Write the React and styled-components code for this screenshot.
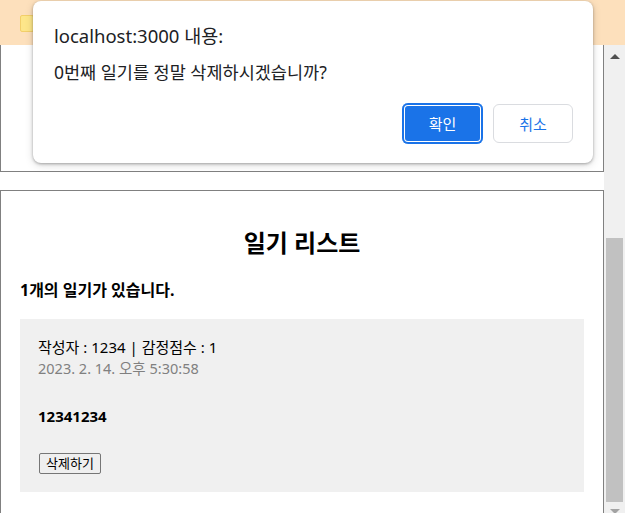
import React from "react";
import styled, { createGlobalStyle } from "styled-components";

const GlobalStyle = createGlobalStyle`
  html, body {
    margin: 0;
    padding: 0;
    background: #fff;
  }
  body {
    font-family: "Noto Sans", "Noto Sans CJK KR", sans-serif;
    color: #000;
  }
`;

const App = () => {
  const diary = {
    id: 0,
    author: "1234",
    emotion: 1,
    content: "12341234",
    created: "2023. 2. 14. 오후 5:30:58",
  };

  return (
    <Screen>
      <GlobalStyle />
      <BookmarkBar>
        <FolderIcon width="14" height="17" viewBox="0 0 14 17">
          <rect x="0.5" y="0.5" width="13" height="16" rx="1.5" fill="#fde68a" stroke="#f2cf6a" />
        </FolderIcon>
      </BookmarkBar>
      <Viewport>
        <Content>
          <EditorBox />
          <ListBox>
            <ListTitle>일기 리스트</ListTitle>
            <ListCount>1개의 일기가 있습니다.</ListCount>
            <DiaryItem>
              <Info>
                <Author>
                  작성자 : {diary.author} | 감정점수 : {diary.emotion}
                </Author>
                <DateText>{diary.created}</DateText>
              </Info>
              <DiaryContent>{diary.content}</DiaryContent>
              <DeleteButton>삭제하기</DeleteButton>
            </DiaryItem>
          </ListBox>
        </Content>
        <Scrollbar>
          <ArrowCell>
            <ArrowUp />
          </ArrowCell>
          <Thumb />
          <ArrowCell>
            <ArrowDown />
          </ArrowCell>
        </Scrollbar>
      </Viewport>

      <Dialog>
        <DialogTitle>localhost:3000 내용:</DialogTitle>
        <DialogMessage>{diary.id}번째 일기를 정말 삭제하시겠습니까?</DialogMessage>
        <DialogActions>
          <ConfirmButton>확인</ConfirmButton>
          <CancelButton>취소</CancelButton>
        </DialogActions>
      </Dialog>
    </Screen>
  );
};

export default App;

const Screen = styled.div`
  position: relative;
  width: 625px;
  height: 513px;
  overflow: hidden;
  display: flex;
  flex-direction: column;
`;

const BookmarkBar = styled.div`
  height: 45px;
  flex: none;
  background: #fde0bc;
  display: flex;
  align-items: center;
  padding-left: 20px;
  box-sizing: border-box;
`;

const FolderIcon = styled.svg`
  display: block;
  margin-top: 1px;
`;

const Viewport = styled.div`
  flex: 1;
  display: flex;
  overflow: hidden;
`;

const Content = styled.div`
  width: 604px;
  flex: none;
`;

const EditorBox = styled.div`
  height: 127px;
  box-sizing: border-box;
  border: 1px solid gray;
  border-top: none;
  margin-bottom: 18px;
`;

const ListBox = styled.div`
  border: 1px solid gray;
  padding: 20px 19px;
  height: 600px;
`;

const ListTitle = styled.h2`
  margin: 17px 0 0;
  text-align: center;
  font-size: 24px;
  line-height: 30px;
  font-weight: 700;
`;

const ListCount = styled.h4`
  margin: 22px 0 0;
  font-size: 16px;
  line-height: 20px;
  font-weight: 700;
`;

const DiaryItem = styled.div`
  margin-top: 19px;
  background: #f0f0f0;
  padding: 18px 18px 18px;
`;

const Info = styled.div`
  font-size: 15px;
  line-height: 21px;
`;

const Author = styled.div``;

const DateText = styled.div`
  color: gray;
  font-size: 14.5px;
`;

const DiaryContent = styled.div`
  margin: 27px 0 26px;
  font-size: 15px;
  line-height: 21px;
  font-weight: 700;
`;

const DeleteButton = styled.button`
  display: block;
  margin-left: 1px;
  height: 21px;
  padding: 0 6px;
  font-family: "Noto Sans", "Noto Sans CJK KR", sans-serif;
  font-size: 13px;
  line-height: 19px;
  background: #efefef;
  border: 1px solid #767676;
  border-radius: 2px;
  color: #000;
`;

const Scrollbar = styled.div`
  width: 21px;
  flex: none;
  background: #f0f0f0;
  display: flex;
  flex-direction: column;
  align-items: center;
`;

const ArrowCell = styled.div`
  width: 21px;
  height: 21px;
  flex: none;
  display: flex;
  align-items: center;
  justify-content: center;
`;

const ArrowUp = styled.div`
  width: 0;
  height: 0;
  border-left: 5px solid transparent;
  border-right: 5px solid transparent;
  border-bottom: 5px solid #505050;
  margin-top: 2px;
`;

const ArrowDown = styled(ArrowUp)`
  border-bottom: none;
  border-top: 5px solid #a3a3a3;
  margin-top: -3px;
`;

const Thumb = styled.div`
  width: 17px;
  height: 264px;
  margin-top: 172px;
  flex: none;
  background: #c1c1c1;
`;

const Dialog = styled.div`
  position: absolute;
  top: 1px;
  left: 33px;
  width: 560px;
  box-sizing: border-box;
  padding: 23px 20px 19px 21px;
  background: #fff;
  border-radius: 8px;
  box-shadow: 0 1px 3px rgba(0, 0, 0, 0.3), 0 2px 8px rgba(0, 0, 0, 0.15);
`;

const DialogTitle = styled.div`
  font-size: 18.5px;
  line-height: 24px;
  color: #202124;
`;

const DialogMessage = styled.div`
  margin-top: 12px;
  font-size: 17.5px;
  line-height: 24px;
  color: #202124;
`;

const DialogActions = styled.div`
  margin-top: 19px;
  display: flex;
  justify-content: flex-end;
  align-items: center;
  gap: 10px;
`;

const BaseButton = styled.button`
  box-sizing: border-box;
  width: 80px;
  font-family: "Noto Sans", "Noto Sans CJK KR", sans-serif;
  font-size: 15px;
  border-radius: 6px;
  padding: 0;
`;

const ConfirmButton = styled(BaseButton)`
  width: 81px;
  height: 41px;
  background: #1a73e8;
  color: #fff;
  border: none;
  box-shadow: inset 0 0 0 2px #1a73e8, inset 0 0 0 3px #fff;
`;

const CancelButton = styled(BaseButton)`
  height: 39px;
  background: #fff;
  color: #1a73e8;
  border: 1px solid #dadce0;
`;
